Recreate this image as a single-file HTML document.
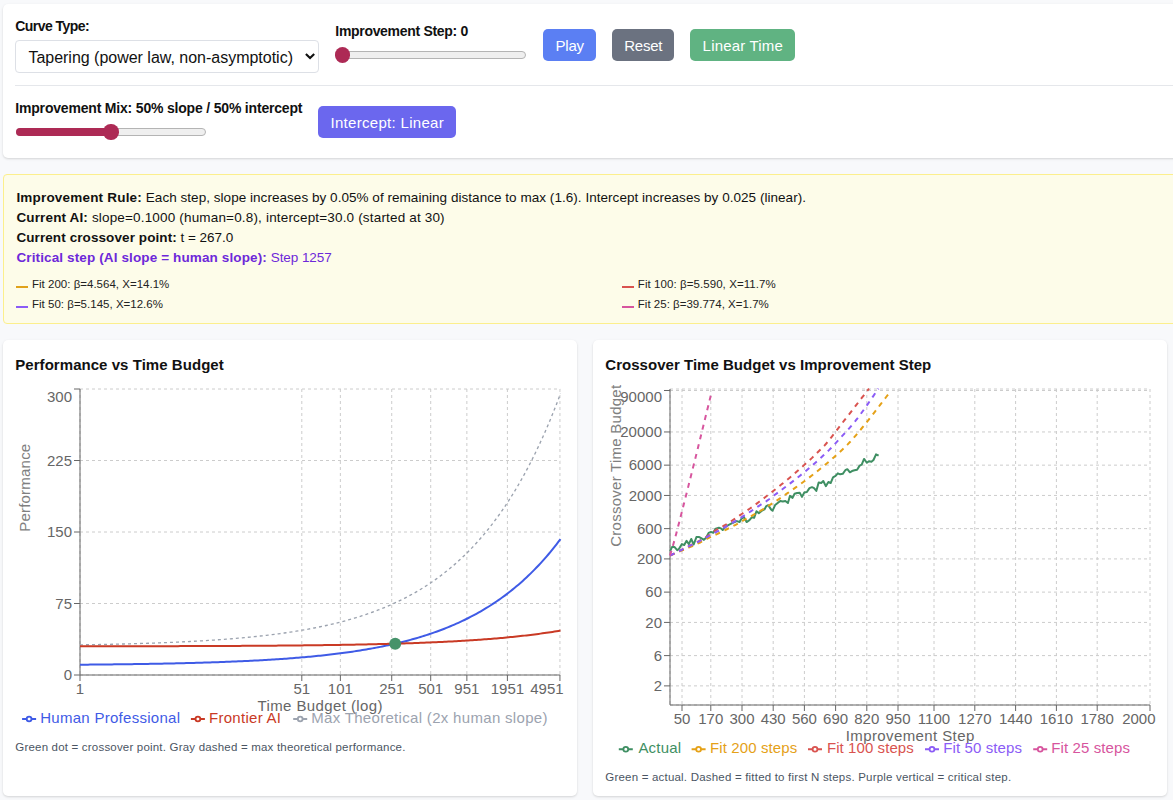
<!DOCTYPE html>
<html lang="en"><head><meta charset="utf-8"><title>Crossover Simulator</title>
<style>
html,body{margin:0;padding:0}
body{background:#f8f9fb;font-family:"Liberation Sans",sans-serif;width:1173px;height:800px;overflow:hidden;position:relative}
.t{position:absolute;white-space:pre;line-height:1;font-family:"Liberation Sans",sans-serif}
.card{position:absolute;background:#fff;border-radius:5px;box-shadow:0 1px 3px rgba(0,0,0,.10),0 1px 2px rgba(0,0,0,.06)}
.btn{position:absolute;border-radius:5px;height:32px;border:0;padding:0;margin:0;display:block;cursor:pointer;font-family:inherit;overflow:visible}
.track{position:absolute;height:6px;border:1px solid #b4b4b4;border-radius:4px;background:#efefef}
input[type=range]{-webkit-appearance:none;appearance:none;position:absolute;margin:0;padding:0;height:8px;background:transparent;outline:0}
input[type=range]::-webkit-slider-runnable-track{-webkit-appearance:none;height:8px;box-sizing:border-box;border:1px solid #b4b4b4;border-radius:4px;background:#efefef}
input[type=range]::-webkit-slider-thumb{-webkit-appearance:none;width:8px;height:6px;background:transparent;border:0}
.fill{position:absolute;height:8px;border-radius:4px;background:#ad2a55}
.thumb{position:absolute;width:15.4px;height:15.4px;border-radius:50%;background:#ad2a55}
svg{position:absolute;left:0;top:0;font-family:"Liberation Sans",sans-serif}
</style></head><body>

<div class="card" style="left:3px;top:4px;width:1240px;height:154px"></div>
<label class="t" style="left:15.30px;top:19.15px;font-size:14px;font-weight:700;color:#111;letter-spacing:-0.561px;">Curve Type:</label>
<select style="position:absolute;left:15px;top:40px;width:304px;height:33px;box-sizing:border-box;margin:0;-webkit-appearance:none;appearance:none;border:1px solid #dde0e6;border-radius:4px;background:#fff;outline:0;font:400 16px 'Liberation Sans',sans-serif;color:#111;letter-spacing:-0.012px;padding:2px 0 0 12.4px"><option selected>Tapering (power law, non-asymptotic)</option><option>Linear</option><option>Asymptotic (saturating)</option></select>
<svg width="1173" height="800" viewBox="0 0 1173 800" style="pointer-events:none"><path d="M305.9 53.9 L310.05 58.1 L314.2 53.9" fill="none" stroke="#111" stroke-width="2.1"/></svg>
<label class="t" style="left:335.30px;top:23.75px;font-size:14px;font-weight:700;color:#111;letter-spacing:-0.310px;">Improvement Step: 0</label>
<input type="range" min="0" max="2000" value="0" style="left:335.4px;top:51px;width:190.4px">
<div class="thumb" style="left:335.1px;top:47.2px"></div>
<button type="button" class="btn" style="left:543px;top:29px;width:53px;background:#5b7ff3"><span class="t" style="left:12.50px;top:9.00px;font-size:15px;color:#fff;letter-spacing:-0.222px">Play</span></button>
<button type="button" class="btn" style="left:612px;top:29px;width:62px;background:#6b7280"><span class="t" style="left:12.30px;top:9.00px;font-size:15px;color:#fff;letter-spacing:-0.278px">Reset</span></button>
<button type="button" class="btn" style="left:690px;top:29px;width:105px;background:#60b382"><span class="t" style="left:12.60px;top:9.00px;font-size:15px;color:#fff;letter-spacing:0.193px">Linear Time</span></button>
<div style="position:absolute;left:15px;top:85px;width:1216px;height:1px;background:#e5e7eb"></div>
<label class="t" style="left:15.30px;top:101.05px;font-size:14px;font-weight:700;color:#111;letter-spacing:-0.188px;">Improvement Mix: 50% slope / 50% intercept</label>
<input type="range" min="0" max="100" value="50" style="left:15.6px;top:128px;width:190.2px">
<div class="fill" style="left:15.6px;top:128px;width:95.4px"></div>
<div class="thumb" style="left:103.4px;top:124.3px"></div>
<button type="button" class="btn" style="left:318px;top:106px;width:138px;background:#6b67ee"><span class="t" style="left:12.50px;top:9.00px;font-size:15px;color:#fff;letter-spacing:0.300px">Intercept: Linear</span></button>
<div style="position:absolute;left:3px;top:174px;width:1238px;height:148px;border:1px solid #fcef8d;border-radius:4px;background:#fdfce9"></div>
<div class="t" style="left:16.40px;top:190.77px;font-size:13.5px;font-weight:700;color:#111;letter-spacing:0.195px;">Improvement Rule:</div>
<div class="t" style="left:142.00px;top:190.77px;font-size:13.5px;font-weight:400;color:#111;letter-spacing:0.040px;"> Each step, slope increases by 0.05% of remaining distance to max (1.6). Intercept increases by 0.025 (linear).</div>
<div class="t" style="left:16.40px;top:210.77px;font-size:13.5px;font-weight:700;color:#111;letter-spacing:0.145px;">Current AI:</div>
<div class="t" style="left:88.00px;top:210.77px;font-size:13.5px;font-weight:400;color:#111;letter-spacing:0.170px;"> slope=0.1000 (human=0.8), intercept=30.0 (started at 30)</div>
<div class="t" style="left:16.40px;top:230.77px;font-size:13.5px;font-weight:700;color:#111;letter-spacing:0.092px;">Current crossover point:</div>
<div class="t" style="left:176.90px;top:230.77px;font-size:13.5px;font-weight:400;color:#111;letter-spacing:-0.037px;"> t = 267.0</div>
<div class="t" style="left:16.40px;top:250.77px;font-size:13.5px;font-weight:700;color:#6d28d9;letter-spacing:0.126px;">Critical step (AI slope = human slope):</div>
<div class="t" style="left:267.00px;top:250.77px;font-size:13.5px;font-weight:400;color:#6d28d9;letter-spacing:-0.061px;"> Step 1257</div>
<div style="position:absolute;left:16.4px;top:286.2px;width:12px;height:2px;background:#e0a21b"></div>
<div class="t" style="left:32.00px;top:278.67px;font-size:11.5px;font-weight:400;color:#222;letter-spacing:0.010px;">Fit 200: β=4.564, X=14.1%</div>
<div style="position:absolute;left:16.4px;top:306.2px;width:12px;height:2px;background:#8b5cf6"></div>
<div class="t" style="left:32.00px;top:298.67px;font-size:11.5px;font-weight:400;color:#222;letter-spacing:0.014px;">Fit 50: β=5.145, X=12.6%</div>
<div style="position:absolute;left:622.2px;top:286.2px;width:12px;height:2px;background:#d9534f"></div>
<div class="t" style="left:637.80px;top:278.67px;font-size:11.5px;font-weight:400;color:#222;letter-spacing:0.072px;">Fit 100: β=5.590, X=11.7%</div>
<div style="position:absolute;left:622.2px;top:306.2px;width:12px;height:2px;background:#d7559e"></div>
<div class="t" style="left:637.80px;top:298.67px;font-size:11.5px;font-weight:400;color:#222;letter-spacing:0.014px;">Fit 25: β=39.774, X=1.7%</div>
<div class="card" style="left:3px;top:340px;width:574px;height:456px"></div>
<div class="card" style="left:593px;top:340px;width:574px;height:456px"></div>
<h3 class="t" style="left:15.30px;top:357.00px;font-size:15px;font-weight:700;color:#111;letter-spacing:0.046px;margin:0;">Performance vs Time Budget</h3>
<h3 class="t" style="left:605.30px;top:357.00px;font-size:15px;font-weight:700;color:#111;letter-spacing:0.029px;margin:0;">Crossover Time Budget vs Improvement Step</h3>
<div class="t" style="left:15.30px;top:741.57px;font-size:11.5px;font-weight:400;color:#4b5563;letter-spacing:0.194px;">Green dot = crossover point. Gray dashed = max theoretical performance.</div>
<div class="t" style="left:605.30px;top:771.57px;font-size:11.5px;font-weight:400;color:#4b5563;letter-spacing:0.200px;">Green = actual. Dashed = fitted to first N steps. Purple vertical = critical step.</div>
<svg width="1173" height="800" viewBox="0 0 1173 800">
<path d="M80.0 603.50H560.2M80.0 532.00H560.2M80.0 460.50H560.2M80.0 389.00H560.2M80.0 675.0H560.2M301.81 389.0V675.0M340.36 389.0V675.0M391.72 389.0V675.0M430.71 389.0V675.0M466.87 389.0V675.0M507.40 389.0V675.0M559.94 389.0V675.0M80.0 389.0V675.0" stroke="#ccc" stroke-dasharray="3 3" fill="none" stroke-width="1"/>
<path d="M80.0 389.0V675.0M80.0 675.0H560.2M74.0 675.00H80.0M74.0 603.50H80.0M74.0 532.00H80.0M74.0 460.50H80.0M74.0 389.00H80.0M80.00 675.0v6M301.81 675.0v6M340.36 675.0v6M391.72 675.0v6M430.71 675.0v6M466.87 675.0v6M507.40 675.0v6M559.94 675.0v6" stroke="#666" fill="none" stroke-width="1"/>
<text x="72.00" y="680.30" font-size="15" text-anchor="end" fill="#666" font-weight="400" style="letter-spacing:0.000px" >0</text>
<text x="72.00" y="608.80" font-size="15" text-anchor="end" fill="#666" font-weight="400" style="letter-spacing:0.000px" >75</text>
<text x="72.00" y="537.30" font-size="15" text-anchor="end" fill="#666" font-weight="400" style="letter-spacing:0.000px" >150</text>
<text x="72.00" y="465.80" font-size="15" text-anchor="end" fill="#666" font-weight="400" style="letter-spacing:0.000px" >225</text>
<text x="72.00" y="401.60" font-size="15" text-anchor="end" fill="#666" font-weight="400" style="letter-spacing:0.000px" >300</text>
<text x="80.00" y="693.80" font-size="15" text-anchor="middle" fill="#666" font-weight="400" style="letter-spacing:0.000px" >1</text>
<text x="301.81" y="693.80" font-size="15" text-anchor="middle" fill="#666" font-weight="400" style="letter-spacing:0.000px" >51</text>
<text x="340.36" y="693.80" font-size="15" text-anchor="middle" fill="#666" font-weight="400" style="letter-spacing:0.000px" >101</text>
<text x="391.72" y="693.80" font-size="15" text-anchor="middle" fill="#666" font-weight="400" style="letter-spacing:0.000px" >251</text>
<text x="430.71" y="693.80" font-size="15" text-anchor="middle" fill="#666" font-weight="400" style="letter-spacing:0.000px" >501</text>
<text x="466.87" y="693.80" font-size="15" text-anchor="middle" fill="#666" font-weight="400" style="letter-spacing:0.000px" >951</text>
<text x="507.40" y="693.80" font-size="15" text-anchor="middle" fill="#666" font-weight="400" style="letter-spacing:0.000px" >1951</text>
<text x="563.60" y="693.80" font-size="15" text-anchor="end" fill="#666" font-weight="400" style="letter-spacing:0.000px" >4951</text>
<path d="M80.00 644.87L82.00 644.84L84.00 644.81L86.01 644.77L88.01 644.74L90.01 644.70L92.01 644.67L94.01 644.63L96.02 644.59L98.02 644.55L100.02 644.51L102.02 644.47L104.03 644.43L106.03 644.39L108.03 644.34L110.03 644.30L112.03 644.26L114.04 644.21L116.04 644.16L118.04 644.11L120.04 644.06L122.04 644.01L124.05 643.96L126.05 643.91L128.05 643.86L130.05 643.80L132.05 643.75L134.06 643.69L136.06 643.63L138.06 643.57L140.06 643.51L142.06 643.45L144.07 643.39L146.07 643.32L148.07 643.25L150.07 643.19L152.08 643.12L154.08 643.05L156.08 642.97L158.08 642.90L160.08 642.83L162.09 642.75L164.09 642.67L166.09 642.59L168.09 642.51L170.09 642.42L172.10 642.34L174.10 642.25L176.10 642.16L178.10 642.07L180.10 641.98L182.11 641.88L184.11 641.78L186.11 641.68L188.11 641.58L190.11 641.48L192.12 641.37L194.12 641.27L196.12 641.16L198.12 641.04L200.13 640.93L202.13 640.81L204.13 640.69L206.13 640.57L208.13 640.44L210.14 640.31L212.14 640.18L214.14 640.05L216.14 639.91L218.14 639.77L220.15 639.63L222.15 639.48L224.15 639.33L226.15 639.18L228.15 639.03L230.16 638.87L232.16 638.71L234.16 638.54L236.16 638.37L238.16 638.20L240.17 638.02L242.17 637.84L244.17 637.66L246.17 637.47L248.18 637.28L250.18 637.08L252.18 636.88L254.18 636.67L256.18 636.47L258.19 636.25L260.19 636.03L262.19 635.81L264.19 635.58L266.19 635.35L268.20 635.11L270.20 634.87L272.20 634.62L274.20 634.37L276.20 634.11L278.21 633.84L280.21 633.57L282.21 633.30L284.21 633.02L286.21 632.73L288.22 632.43L290.22 632.13L292.22 631.83L294.22 631.51L296.23 631.19L298.23 630.86L300.23 630.53L302.23 630.19L304.23 629.84L306.24 629.48L308.24 629.12L310.24 628.75L312.24 628.37L314.24 627.98L316.25 627.58L318.25 627.18L320.25 626.76L322.25 626.34L324.25 625.91L326.26 625.47L328.26 625.02L330.26 624.56L332.26 624.09L334.26 623.61L336.27 623.12L338.27 622.62L340.27 622.10L342.27 621.58L344.28 621.05L346.28 620.50L348.28 619.94L350.28 619.37L352.28 618.79L354.29 618.20L356.29 617.59L358.29 616.97L360.29 616.34L362.29 615.69L364.30 615.03L366.30 614.36L368.30 613.67L370.30 612.96L372.30 612.24L374.31 611.51L376.31 610.76L378.31 609.99L380.31 609.20L382.31 608.40L384.32 607.59L386.32 606.75L388.32 605.90L390.32 605.03L392.33 604.14L394.33 603.23L396.33 602.30L398.33 601.35L400.33 600.38L402.34 599.39L404.34 598.38L406.34 597.34L408.34 596.29L410.34 595.21L412.35 594.11L414.35 592.98L416.35 591.83L418.35 590.66L420.35 589.46L422.36 588.23L424.36 586.98L426.36 585.70L428.36 584.39L430.36 583.06L432.37 581.70L434.37 580.30L436.37 578.88L438.37 577.43L440.38 575.94L442.38 574.43L444.38 572.88L446.38 571.30L448.38 569.68L450.39 568.03L452.39 566.34L454.39 564.62L456.39 562.86L458.39 561.06L460.40 559.23L462.40 557.35L464.40 555.43L466.40 553.48L468.40 551.48L470.41 549.43L472.41 547.35L474.41 545.21L476.41 543.04L478.41 540.81L480.42 538.54L482.42 536.22L484.42 533.85L486.42 531.42L488.43 528.95L490.43 526.42L492.43 523.84L494.43 521.20L496.43 518.51L498.44 515.76L500.44 512.94L502.44 510.07L504.44 507.14L506.44 504.14L508.45 501.08L510.45 497.95L512.45 494.76L514.45 491.49L516.45 488.16L518.46 484.75L520.46 481.27L522.46 477.72L524.46 474.09L526.46 470.38L528.47 466.59L530.47 462.72L532.47 458.77L534.47 454.73L536.48 450.61L538.48 446.39L540.48 442.09L542.48 437.69L544.48 433.20L546.49 428.61L548.49 423.93L550.49 419.14L552.49 414.25L554.49 409.25L556.50 404.15L558.50 398.93L560.50 393.61" stroke="#9ca3af" stroke-width="1.35" stroke-dasharray="3 3" fill="none"/>
<path d="M80.00 664.70L82.00 664.69L84.00 664.67L86.01 664.65L88.01 664.64L90.01 664.62L92.01 664.60L94.01 664.58L96.02 664.56L98.02 664.54L100.02 664.52L102.02 664.50L104.03 664.48L106.03 664.46L108.03 664.44L110.03 664.42L112.03 664.39L114.04 664.37L116.04 664.35L118.04 664.32L120.04 664.30L122.04 664.27L124.05 664.25L126.05 664.22L128.05 664.20L130.05 664.17L132.05 664.14L134.06 664.11L136.06 664.08L138.06 664.05L140.06 664.02L142.06 663.99L144.07 663.96L146.07 663.93L148.07 663.89L150.07 663.86L152.08 663.83L154.08 663.79L156.08 663.75L158.08 663.72L160.08 663.68L162.09 663.64L164.09 663.60L166.09 663.56L168.09 663.52L170.09 663.48L172.10 663.44L174.10 663.39L176.10 663.35L178.10 663.30L180.10 663.26L182.11 663.21L184.11 663.16L186.11 663.11L188.11 663.06L190.11 663.01L192.12 662.95L194.12 662.90L196.12 662.84L198.12 662.79L200.13 662.73L202.13 662.67L204.13 662.61L206.13 662.55L208.13 662.49L210.14 662.42L212.14 662.36L214.14 662.29L216.14 662.22L218.14 662.15L220.15 662.08L222.15 662.01L224.15 661.93L226.15 661.86L228.15 661.78L230.16 661.70L232.16 661.62L234.16 661.54L236.16 661.45L238.16 661.37L240.17 661.28L242.17 661.19L244.17 661.10L246.17 661.00L248.18 660.90L250.18 660.81L252.18 660.71L254.18 660.60L256.18 660.50L258.19 660.39L260.19 660.28L262.19 660.17L264.19 660.06L266.19 659.94L268.20 659.82L270.20 659.70L272.20 659.58L274.20 659.45L276.20 659.32L278.21 659.19L280.21 659.05L282.21 658.92L284.21 658.77L286.21 658.63L288.22 658.48L290.22 658.33L292.22 658.18L294.22 658.02L296.23 657.86L298.23 657.70L300.23 657.53L302.23 657.36L304.23 657.19L306.24 657.01L308.24 656.83L310.24 656.64L312.24 656.45L314.24 656.26L316.25 656.06L318.25 655.86L320.25 655.65L322.25 655.44L324.25 655.22L326.26 655.00L328.26 654.78L330.26 654.55L332.26 654.31L334.26 654.07L336.27 653.83L338.27 653.57L340.27 653.32L342.27 653.06L344.28 652.79L346.28 652.52L348.28 652.24L350.28 651.95L352.28 651.66L354.29 651.37L356.29 651.06L358.29 650.75L360.29 650.44L362.29 650.11L364.30 649.78L366.30 649.44L368.30 649.10L370.30 648.75L372.30 648.39L374.31 648.02L376.31 647.64L378.31 647.26L380.31 646.87L382.31 646.47L384.32 646.06L386.32 645.64L388.32 645.22L390.32 644.78L392.33 644.33L394.33 643.88L396.33 643.42L398.33 642.94L400.33 642.46L402.34 641.96L404.34 641.45L406.34 640.94L408.34 640.41L410.34 639.87L412.35 639.32L414.35 638.76L416.35 638.18L418.35 637.60L420.35 637.00L422.36 636.38L424.36 635.76L426.36 635.12L428.36 634.46L430.36 633.80L432.37 633.12L434.37 632.42L436.37 631.71L438.37 630.98L440.38 630.24L442.38 629.48L444.38 628.71L446.38 627.92L448.38 627.11L450.39 626.28L452.39 625.44L454.39 624.58L456.39 623.70L458.39 622.80L460.40 621.88L462.40 620.94L464.40 619.98L466.40 619.00L468.40 618.00L470.41 616.98L472.41 615.94L474.41 614.87L476.41 613.78L478.41 612.67L480.42 611.54L482.42 610.38L484.42 609.19L486.42 607.98L488.43 606.74L490.43 605.48L492.43 604.19L494.43 602.87L496.43 601.52L498.44 600.14L500.44 598.74L502.44 597.30L504.44 595.84L506.44 594.34L508.45 592.81L510.45 591.24L512.45 589.64L514.45 588.01L516.45 586.35L518.46 584.64L520.46 582.90L522.46 581.13L524.46 579.31L526.46 577.46L528.47 575.56L530.47 573.63L532.47 571.65L534.47 569.63L536.48 567.57L538.48 565.46L540.48 563.31L542.48 561.11L544.48 558.87L546.49 556.57L548.49 554.23L550.49 551.84L552.49 549.39L554.49 546.89L556.50 544.34L558.50 541.73L560.50 539.07" stroke="#3f5be6" stroke-width="2" fill="none"/>
<path d="M80.00 646.30L82.00 646.30L84.00 646.30L86.01 646.30L88.01 646.30L90.01 646.29L92.01 646.29L94.01 646.29L96.02 646.29L98.02 646.28L100.02 646.28L102.02 646.28L104.03 646.28L106.03 646.27L108.03 646.27L110.03 646.27L112.03 646.27L114.04 646.26L116.04 646.26L118.04 646.26L120.04 646.25L122.04 646.25L124.05 646.25L126.05 646.24L128.05 646.24L130.05 646.24L132.05 646.23L134.06 646.23L136.06 646.23L138.06 646.22L140.06 646.22L142.06 646.22L144.07 646.21L146.07 646.21L148.07 646.20L150.07 646.20L152.08 646.19L154.08 646.19L156.08 646.19L158.08 646.18L160.08 646.18L162.09 646.17L164.09 646.17L166.09 646.16L168.09 646.16L170.09 646.15L172.10 646.15L174.10 646.14L176.10 646.14L178.10 646.13L180.10 646.12L182.11 646.12L184.11 646.11L186.11 646.11L188.11 646.10L190.11 646.09L192.12 646.09L194.12 646.08L196.12 646.07L198.12 646.07L200.13 646.06L202.13 646.05L204.13 646.04L206.13 646.04L208.13 646.03L210.14 646.02L212.14 646.01L214.14 646.00L216.14 645.99L218.14 645.99L220.15 645.98L222.15 645.97L224.15 645.96L226.15 645.95L228.15 645.94L230.16 645.93L232.16 645.92L234.16 645.91L236.16 645.90L238.16 645.89L240.17 645.88L242.17 645.87L244.17 645.85L246.17 645.84L248.18 645.83L250.18 645.82L252.18 645.80L254.18 645.79L256.18 645.78L258.19 645.77L260.19 645.75L262.19 645.74L264.19 645.72L266.19 645.71L268.20 645.69L270.20 645.68L272.20 645.66L274.20 645.65L276.20 645.63L278.21 645.62L280.21 645.60L282.21 645.58L284.21 645.56L286.21 645.55L288.22 645.53L290.22 645.51L292.22 645.49L294.22 645.47L296.23 645.45L298.23 645.43L300.23 645.41L302.23 645.39L304.23 645.36L306.24 645.34L308.24 645.32L310.24 645.30L312.24 645.27L314.24 645.25L316.25 645.22L318.25 645.20L320.25 645.17L322.25 645.15L324.25 645.12L326.26 645.09L328.26 645.06L330.26 645.03L332.26 645.01L334.26 644.98L336.27 644.94L338.27 644.91L340.27 644.88L342.27 644.85L344.28 644.82L346.28 644.78L348.28 644.75L350.28 644.71L352.28 644.67L354.29 644.64L356.29 644.60L358.29 644.56L360.29 644.52L362.29 644.48L364.30 644.44L366.30 644.40L368.30 644.35L370.30 644.31L372.30 644.27L374.31 644.22L376.31 644.17L378.31 644.12L380.31 644.08L382.31 644.03L384.32 643.97L386.32 643.92L388.32 643.87L390.32 643.81L392.33 643.76L394.33 643.70L396.33 643.64L398.33 643.58L400.33 643.52L402.34 643.46L404.34 643.40L406.34 643.33L408.34 643.27L410.34 643.20L412.35 643.13L414.35 643.06L416.35 642.99L418.35 642.92L420.35 642.84L422.36 642.76L424.36 642.69L426.36 642.61L428.36 642.52L430.36 642.44L432.37 642.36L434.37 642.27L436.37 642.18L438.37 642.09L440.38 642.00L442.38 641.90L444.38 641.80L446.38 641.71L448.38 641.61L450.39 641.50L452.39 641.40L454.39 641.29L456.39 641.18L458.39 641.07L460.40 640.95L462.40 640.83L464.40 640.71L466.40 640.59L468.40 640.47L470.41 640.34L472.41 640.21L474.41 640.08L476.41 639.94L478.41 639.80L480.42 639.66L482.42 639.51L484.42 639.37L486.42 639.21L488.43 639.06L490.43 638.90L492.43 638.74L494.43 638.58L496.43 638.41L498.44 638.23L500.44 638.06L502.44 637.88L504.44 637.70L506.44 637.51L508.45 637.32L510.45 637.12L512.45 636.92L514.45 636.72L516.45 636.51L518.46 636.30L520.46 636.08L522.46 635.86L524.46 635.63L526.46 635.40L528.47 635.16L530.47 634.92L532.47 634.67L534.47 634.42L536.48 634.16L538.48 633.90L540.48 633.63L542.48 633.36L544.48 633.08L546.49 632.79L548.49 632.50L550.49 632.20L552.49 631.89L554.49 631.58L556.50 631.26L558.50 630.93L560.50 630.60" stroke="#c93a25" stroke-width="2" fill="none"/>
<circle cx="395.20" cy="643.68" r="6" fill="#46926a"/>
<text x="320.20" y="711.00" font-size="15" text-anchor="middle" fill="#666" font-weight="400" style="letter-spacing:0.402px" >Time Budget (log)</text>
<g transform="rotate(-90 30.5 531.8)"><text x="30.50" y="531.80" font-size="15" text-anchor="start" fill="#808080" font-weight="400" style="letter-spacing:0.211px" >Performance</text></g>
<path d="M22.1 719.0h4.6M31.5 719.0h4.6" stroke="#3f5be6" stroke-width="2" fill="none"/><circle cx="29.1" cy="719.0" r="2.4" stroke="#3f5be6" stroke-width="1.8" fill="none"/>
<text x="40.20" y="722.60" font-size="15" text-anchor="start" fill="#3f5be6" font-weight="400" style="letter-spacing:0.279px" >Human Professional</text>
<path d="M190.9 719.0h4.6M200.3 719.0h4.6" stroke="#c93a25" stroke-width="2" fill="none"/><circle cx="197.9" cy="719.0" r="2.4" stroke="#c93a25" stroke-width="1.8" fill="none"/>
<text x="209.00" y="722.60" font-size="15" text-anchor="start" fill="#c93a25" font-weight="400" style="letter-spacing:0.282px" >Frontier AI</text>
<path d="M293.2 719.0h4.6M302.6 719.0h4.6" stroke="#9ca3af" stroke-width="2" fill="none"/><circle cx="300.2" cy="719.0" r="2.4" stroke="#9ca3af" stroke-width="1.8" fill="none"/>
<text x="311.20" y="722.60" font-size="15" text-anchor="start" fill="#9ca3af" font-weight="400" style="letter-spacing:0.316px" >Max Theoretical (2x human slope)</text>
<path d="M670.0 685.89H1150.0M670.0 655.60H1150.0M670.0 622.41H1150.0M670.0 592.12H1150.0M670.0 558.92H1150.0M670.0 528.64H1150.0M670.0 495.44H1150.0M670.0 465.15H1150.0M670.0 431.96H1150.0M670.0 390.49H1150.0M670.0 389.00H1150.0M670.0 705.0H1150.0M682.00 389.0V705.0M710.80 389.0V705.0M742.00 389.0V705.0M773.20 389.0V705.0M804.40 389.0V705.0M835.60 389.0V705.0M866.80 389.0V705.0M898.00 389.0V705.0M934.00 389.0V705.0M974.80 389.0V705.0M1015.60 389.0V705.0M1056.40 389.0V705.0M1097.20 389.0V705.0M1150.00 389.0V705.0M670.0 389.0V705.0" stroke="#ccc" stroke-dasharray="3 3" fill="none" stroke-width="1"/>
<path d="M670.0 389.0V705.0M670.0 705.0H1150.0M664.0 685.89H670.0M664.0 655.60H670.0M664.0 622.41H670.0M664.0 592.12H670.0M664.0 558.92H670.0M664.0 528.64H670.0M664.0 495.44H670.0M664.0 465.15H670.0M664.0 431.96H670.0M664.0 390.49H670.0M682.00 705.0v6M710.80 705.0v6M742.00 705.0v6M773.20 705.0v6M804.40 705.0v6M835.60 705.0v6M866.80 705.0v6M898.00 705.0v6M934.00 705.0v6M974.80 705.0v6M1015.60 705.0v6M1056.40 705.0v6M1097.20 705.0v6M1150.00 705.0v6" stroke="#666" fill="none" stroke-width="1"/>
<text x="662.00" y="691.19" font-size="15" text-anchor="end" fill="#666" font-weight="400" style="letter-spacing:0.000px" >2</text>
<text x="662.00" y="660.90" font-size="15" text-anchor="end" fill="#666" font-weight="400" style="letter-spacing:0.000px" >6</text>
<text x="662.00" y="627.71" font-size="15" text-anchor="end" fill="#666" font-weight="400" style="letter-spacing:0.000px" >20</text>
<text x="662.00" y="597.42" font-size="15" text-anchor="end" fill="#666" font-weight="400" style="letter-spacing:0.000px" >60</text>
<text x="662.00" y="564.22" font-size="15" text-anchor="end" fill="#666" font-weight="400" style="letter-spacing:0.000px" >200</text>
<text x="662.00" y="533.94" font-size="15" text-anchor="end" fill="#666" font-weight="400" style="letter-spacing:0.000px" >600</text>
<text x="662.00" y="500.74" font-size="15" text-anchor="end" fill="#666" font-weight="400" style="letter-spacing:0.000px" >2000</text>
<text x="662.00" y="470.45" font-size="15" text-anchor="end" fill="#666" font-weight="400" style="letter-spacing:0.000px" >6000</text>
<text x="662.00" y="437.26" font-size="15" text-anchor="end" fill="#666" font-weight="400" style="letter-spacing:0.000px" >20000</text>
<text x="662.00" y="402.19" font-size="15" text-anchor="end" fill="#666" font-weight="400" style="letter-spacing:0.000px" >90000</text>
<text x="682.00" y="723.80" font-size="15" text-anchor="middle" fill="#666" font-weight="400" style="letter-spacing:0.000px" >50</text>
<text x="710.80" y="723.80" font-size="15" text-anchor="middle" fill="#666" font-weight="400" style="letter-spacing:0.000px" >170</text>
<text x="742.00" y="723.80" font-size="15" text-anchor="middle" fill="#666" font-weight="400" style="letter-spacing:0.000px" >300</text>
<text x="773.20" y="723.80" font-size="15" text-anchor="middle" fill="#666" font-weight="400" style="letter-spacing:0.000px" >430</text>
<text x="804.40" y="723.80" font-size="15" text-anchor="middle" fill="#666" font-weight="400" style="letter-spacing:0.000px" >560</text>
<text x="835.60" y="723.80" font-size="15" text-anchor="middle" fill="#666" font-weight="400" style="letter-spacing:0.000px" >690</text>
<text x="866.80" y="723.80" font-size="15" text-anchor="middle" fill="#666" font-weight="400" style="letter-spacing:0.000px" >820</text>
<text x="898.00" y="723.80" font-size="15" text-anchor="middle" fill="#666" font-weight="400" style="letter-spacing:0.000px" >950</text>
<text x="934.00" y="723.80" font-size="15" text-anchor="middle" fill="#666" font-weight="400" style="letter-spacing:0.000px" >1100</text>
<text x="974.80" y="723.80" font-size="15" text-anchor="middle" fill="#666" font-weight="400" style="letter-spacing:0.000px" >1270</text>
<text x="1015.60" y="723.80" font-size="15" text-anchor="middle" fill="#666" font-weight="400" style="letter-spacing:0.000px" >1440</text>
<text x="1056.40" y="723.80" font-size="15" text-anchor="middle" fill="#666" font-weight="400" style="letter-spacing:0.000px" >1610</text>
<text x="1097.20" y="723.80" font-size="15" text-anchor="middle" fill="#666" font-weight="400" style="letter-spacing:0.000px" >1780</text>
<text x="1155.50" y="723.80" font-size="15" text-anchor="end" fill="#666" font-weight="400" style="letter-spacing:0.000px" >2000</text>
<text x="910.20" y="740.80" font-size="15" text-anchor="middle" fill="#666" font-weight="400" style="letter-spacing:0.402px" >Improvement Step</text>
<g transform="rotate(-90 620.8 546.8)"><text x="620.80" y="546.80" font-size="15" text-anchor="start" fill="#808080" font-weight="400" style="letter-spacing:0.260px" >Crossover Time Budget</text></g>
<path d="M670.16 551.13L672.04 546.90L674.38 546.90L677.20 550.19L679.07 548.78L681.89 544.09L684.23 545.03L686.58 540.81L688.92 544.09L691.27 538.93L693.61 544.56L696.43 537.05L699.24 537.05L701.59 538.46L703.93 539.87L706.28 537.52L708.62 532.83L710.97 531.89L713.31 532.83L715.66 528.61L718.94 527.67L721.29 528.61L722.69 530.02L725.04 527.20L727.85 525.33L730.67 523.92L733.48 522.51L736.76 521.11L739.58 522.05L741.45 518.76L743.80 516.89L746.61 522.05L749.43 520.17L751.77 517.35L754.12 517.82L756.46 511.26L758.81 513.13L762.56 510.32L764.44 509.38L766.31 506.10L768.19 505.16L771.00 509.38L772.56 510.70L775.12 505.06L777.68 503.01L780.25 500.96L782.81 501.48L785.37 500.96L787.93 503.01L789.98 495.84L792.54 497.89L794.59 493.79L797.15 492.97L799.71 492.77L801.97 496.86L804.32 492.56L806.89 492.05L809.45 488.16L812.01 487.13L814.06 488.16L816.31 490.92L818.67 482.52L821.23 483.03L823.28 480.98L825.84 486.11L828.40 482.01L830.66 483.03L833.01 477.40L835.57 475.86L837.83 473.30L840.18 474.32L842.75 473.81L845.31 470.23L847.36 469.20L849.92 472.27L851.97 471.05L854.53 470.23L857.09 469.71L859.65 465.61L861.70 464.59L864.06 458.95L866.82 462.75L869.18 461.21L871.43 461.72L873.48 459.98L876.05 454.34L878.61 455.68" stroke="#3f8f63" stroke-width="2" fill="none" stroke-linejoin="round"/>
<path d="M670.00 555.50L672.73 554.34L675.47 553.19L678.20 552.04L680.93 550.89L683.67 549.73L686.40 548.57L689.14 547.40L691.87 546.22L694.60 545.04L697.34 543.81L700.07 542.52L702.81 541.10L705.54 539.61L708.27 538.16L711.01 536.83L713.74 535.56L716.47 534.29L719.21 532.99L721.94 531.68L724.67 530.35L727.41 529.00L730.14 527.63L732.88 526.23L735.61 524.79L738.34 523.28L741.08 521.72L743.81 520.17L746.55 518.66L749.28 517.17L752.01 515.67L754.75 514.12L757.48 512.54L760.21 510.93L762.95 509.28L765.68 507.58L768.41 505.85L771.15 504.11L773.88 502.37L776.62 500.62L779.35 498.80L782.08 496.92L784.82 495.04L787.55 493.15L790.29 491.25L793.02 489.34L795.75 487.42L798.49 485.47L801.22 483.51L803.95 481.52L806.69 479.49L809.42 477.42L812.15 475.30L814.89 473.15L817.62 470.97L820.36 468.76L823.09 466.53L825.82 464.27L828.56 461.96L831.29 459.60L834.03 457.18L836.76 454.73L839.49 452.27L842.23 449.75L844.96 447.14L847.69 444.39L850.43 441.49L853.16 438.45L855.89 435.30L858.63 432.06L861.36 428.76L864.10 425.40L866.83 422.01L869.56 418.58L872.30 415.09L875.03 411.56L877.77 408.00L880.50 404.42L883.23 400.83L885.97 397.26L888.70 393.70" stroke="#e5a117" stroke-width="2" stroke-dasharray="5 5" fill="none"/>
<path d="M670.00 555.50L672.49 554.31L674.98 553.12L677.46 551.92L679.95 550.72L682.44 549.49L684.92 548.23L687.41 546.97L689.90 545.70L692.39 544.46L694.88 543.23L697.36 541.98L699.85 540.64L702.34 539.25L704.83 537.80L707.31 536.25L709.80 534.54L712.29 532.69L714.77 530.88L717.26 529.29L719.75 527.92L722.24 526.62L724.73 525.23L727.21 523.72L729.70 522.15L732.19 520.53L734.67 518.88L737.16 517.15L739.65 515.42L742.14 513.74L744.62 512.09L747.11 510.45L749.60 508.76L752.09 507.02L754.58 505.25L757.06 503.43L759.55 501.55L762.04 499.66L764.52 497.75L767.01 495.82L769.50 493.89L771.99 491.95L774.48 490.02L776.96 488.06L779.45 486.08L781.94 484.09L784.42 482.11L786.91 480.12L789.40 478.06L791.89 475.94L794.38 473.76L796.86 471.57L799.35 469.35L801.84 467.12L804.33 464.88L806.81 462.66L809.30 460.43L811.79 458.13L814.27 455.72L816.76 453.24L819.25 450.76L821.74 448.38L824.23 445.89L826.71 442.99L829.20 439.92L831.69 436.78L834.17 433.60L836.66 430.38L839.15 427.14L841.64 423.91L844.12 420.68L846.61 417.48L849.10 414.28L851.59 411.08L854.08 407.87L856.56 404.66L859.05 401.45L861.54 398.23L864.02 395.02L866.51 391.81L869.00 388.60" stroke="#d9534f" stroke-width="2" stroke-dasharray="5 5" fill="none"/>
<path d="M670.00 555.50L672.61 554.24L675.21 552.99L677.82 551.73L680.42 550.48L683.03 549.22L685.64 547.96L688.24 546.70L690.85 545.43L693.46 544.17L696.06 542.89L698.67 541.58L701.27 540.18L703.88 538.73L706.49 537.26L709.09 535.86L711.70 534.49L714.31 533.13L716.91 531.73L719.52 530.29L722.12 528.83L724.73 527.34L727.34 525.82L729.94 524.26L732.55 522.68L735.16 521.10L737.76 519.54L740.37 517.96L742.98 516.34L745.58 514.69L748.19 513.01L750.79 511.30L753.40 509.56L756.01 507.80L758.61 506.05L761.22 504.38L763.83 502.76L766.43 501.09L769.04 499.26L771.64 497.31L774.25 495.32L776.86 493.37L779.46 491.43L782.07 489.49L784.67 487.54L787.28 485.59L789.89 483.62L792.49 481.62L795.10 479.57L797.71 477.49L800.31 475.41L802.92 473.34L805.52 471.25L808.13 469.08L810.74 466.83L813.34 464.52L815.95 462.19L818.56 459.84L821.16 457.45L823.77 455.05L826.38 452.64L828.98 450.12L831.59 447.46L834.19 444.72L836.80 441.91L839.41 439.03L842.01 436.17L844.62 433.33L847.23 430.47L849.83 427.56L852.44 424.54L855.04 421.39L857.65 418.07L860.26 414.59L862.86 411.01L865.47 407.33L868.08 403.60L870.68 399.83L873.29 396.06L875.89 392.30L878.50 388.60" stroke="#8b5cf6" stroke-width="2" stroke-dasharray="5 5" fill="none"/>
<path d="M670.00 555.50L670.51 553.75L671.02 552.02L671.53 550.30L672.03 548.59L672.54 546.88L673.05 545.16L673.56 543.42L674.07 541.65L674.58 539.85L675.09 538.00L675.60 536.10L676.11 534.15L676.61 532.20L677.12 530.25L677.63 528.29L678.14 526.32L678.65 524.36L679.16 522.39L679.67 520.41L680.17 518.43L680.68 516.45L681.19 514.47L681.70 512.48L682.21 510.49L682.72 508.49L683.23 506.49L683.74 504.49L684.25 502.49L684.75 500.48L685.26 498.47L685.77 496.46L686.28 494.45L686.79 492.43L687.30 490.42L687.81 488.40L688.32 486.38L688.82 484.35L689.33 482.33L689.84 480.30L690.35 478.28L690.86 476.25L691.37 474.22L691.88 472.19L692.38 470.15L692.89 468.12L693.40 466.09L693.91 464.06L694.42 462.02L694.93 459.98L695.44 457.93L695.95 455.88L696.46 453.83L696.96 451.77L697.47 449.72L697.98 447.66L698.49 445.59L699.00 443.53L699.51 441.46L700.02 439.39L700.53 437.32L701.03 435.25L701.54 433.17L702.05 431.10L702.56 429.02L703.07 426.94L703.58 424.86L704.09 422.79L704.60 420.71L705.10 418.63L705.61 416.55L706.12 414.47L706.63 412.39L707.14 410.31L707.65 408.24L708.16 406.16L708.67 404.09L709.17 402.01L709.68 399.94L710.19 397.87L710.70 395.80" stroke="#d7559e" stroke-width="2" stroke-dasharray="5 5" fill="none"/>
<path d="M618.8 749.3h4.6M628.2 749.3h4.6" stroke="#3f8f63" stroke-width="2" fill="none"/><circle cx="625.8" cy="749.3" r="2.4" stroke="#3f8f63" stroke-width="1.8" fill="none"/>
<text x="638.40" y="752.90" font-size="15" text-anchor="start" fill="#3f8f63" font-weight="400" style="letter-spacing:0.199px" >Actual</text>
<path d="M691.6 749.3h4.6M701.0 749.3h4.6" stroke="#e5a117" stroke-width="2" fill="none"/><circle cx="698.6" cy="749.3" r="2.4" stroke="#e5a117" stroke-width="1.8" fill="none"/>
<text x="710.00" y="752.90" font-size="15" text-anchor="start" fill="#e5a117" font-weight="400" style="letter-spacing:0.116px" >Fit 200 steps</text>
<path d="M808.0 749.3h4.6M817.4 749.3h4.6" stroke="#d9534f" stroke-width="2" fill="none"/><circle cx="815.0" cy="749.3" r="2.4" stroke="#d9534f" stroke-width="1.8" fill="none"/>
<text x="826.90" y="752.90" font-size="15" text-anchor="start" fill="#d9534f" font-weight="400" style="letter-spacing:0.085px" >Fit 100 steps</text>
<path d="M925.0 749.3h4.6M934.4 749.3h4.6" stroke="#8b5cf6" stroke-width="2" fill="none"/><circle cx="932.0" cy="749.3" r="2.4" stroke="#8b5cf6" stroke-width="1.8" fill="none"/>
<text x="943.30" y="752.90" font-size="15" text-anchor="start" fill="#8b5cf6" font-weight="400" style="letter-spacing:0.104px" >Fit 50 steps</text>
<path d="M1033.2 749.3h4.6M1042.6 749.3h4.6" stroke="#d7559e" stroke-width="2" fill="none"/><circle cx="1040.2" cy="749.3" r="2.4" stroke="#d7559e" stroke-width="1.8" fill="none"/>
<text x="1051.30" y="752.90" font-size="15" text-anchor="start" fill="#d7559e" font-weight="400" style="letter-spacing:0.096px" >Fit 25 steps</text>
</svg>
</body></html>
